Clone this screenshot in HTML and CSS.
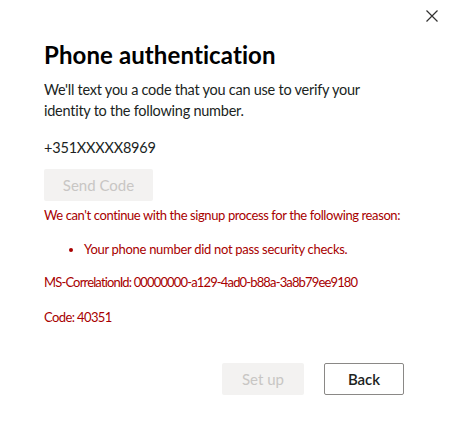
FILE: index.html
```html
<!DOCTYPE html>
<html>
<head>
<meta charset="utf-8">
<link rel="stylesheet" href="styles.css">
</head>
<body>
<div class="dialog">
  <div class="topbar">
    <button class="close" aria-label="Close">
      <svg width="12" height="12" viewBox="0 0 12 12"><path d="M0.5 0.5 L11.5 11.5 M11.5 0.5 L0.5 11.5" stroke="#323130" stroke-width="1.2" fill="none"/></svg>
    </button>
  </div>
  <div class="content">
    <h1 class="title">Phone authentication</h1>
    <p class="desc">We'll text you a code that you can use to verify your identity to the following number.</p>
    <p class="phone">+351XXXXX8969</p>
    <button class="btn btn-disabled send">Send Code</button>
    <p class="err">We can't continue with the signup process for the following reason:</p>
    <ul class="err-list"><li>Your phone number did not pass security checks.</li></ul>
    <p class="err meta corr">MS-CorrelationId: 00000000-a129-4ad0-b88a-3a8b79ee9180</p>
    <p class="err meta code">Code: 40351</p>
    <div class="actions">
      <button class="btn btn-disabled setup">Set up</button>
      <button class="btn btn-outline back">Back</button>
    </div>
  </div>
</div>
</body>
</html>
```
FILE: styles.css
```css
html, body { margin: 0; padding: 0; background: #fff; }
body { font-family: "Lato", "Noto Sans", sans-serif; color: #201f1e; }
.dialog { width: 449px; height: 433px; box-sizing: border-box; }
.topbar { display: flex; justify-content: flex-end; padding: 10px 11px 0 0; height: 22px; }
.close { border: 0; background: none; padding: 0; width: 12px; height: 12px; display: flex; }
.content { padding: 0 45px 0 44px; }
.title { margin: 7px 0 0; font-size: 24px; font-weight: 700; line-height: 32px; color: #000; letter-spacing: 0.1px; }
.desc { margin: 8px 0 0; font-size: 14.5px; line-height: 21px; color: #201f1e; letter-spacing: -0.25px; }
.phone { margin: 16px 0 0; font-size: 14.5px; line-height: 21px; letter-spacing: -0.2px; }
.btn { font-family: inherit; font-size: 15px; height: 32px; border-radius: 2px; box-sizing: border-box; }
.btn-disabled { background: #f3f2f1; color: #c8c6c4; border: 0; }
.send { margin-top: 11px; width: 109px; display: block; }
.err { margin: 5px 0 0; font-size: 13px; line-height: 18px; color: #a80000; letter-spacing: -0.4px; white-space: nowrap; }
.err-list { margin: 16px 0 0; padding-left: 40px; font-size: 13px; line-height: 18px; color: #a80000; letter-spacing: -0.3px; }
.corr { margin-top: 15px; letter-spacing: -0.85px; }
.code { margin-top: 17px; letter-spacing: -0.6px; }
.actions { display: flex; justify-content: flex-end; gap: 20px; margin-top: 37px; }
.setup { width: 82px; }
.back { width: 80px; }
.btn-outline { background: #fff; border: 1px solid #8a8886; color: #201f1e; font-weight: 600; }
```
